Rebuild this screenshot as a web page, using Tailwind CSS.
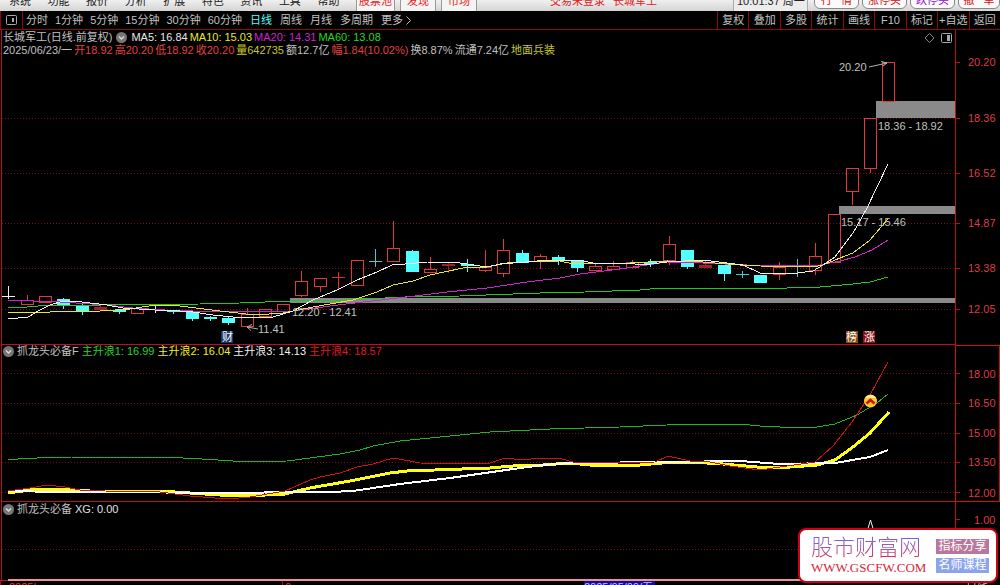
<!DOCTYPE html>
<html lang="zh-CN">
<head>
    <meta charset="UTF-8">
    <meta name="viewport" content="width=device-width, initial-scale=1.0">
    <title>长城军工 日线</title>
    <script src="https://cdn.jsdelivr.net/npm/@tailwindcss/browser@4"></script>
</head>
<body class="relative bg-black text-[#c0c0c0] text-[11px] leading-[13px] font-['Liberation_Sans','Noto_Sans_CJK_SC',sans-serif] overflow-x-hidden">
    <!-- Menú principal -->
    <header class="h-[11px] overflow-hidden flex items-end justify-between bg-linear-to-b from-[#f0f0f0] to-[#d4d4d4] text-[#222] whitespace-nowrap">
        <nav class="grid grid-cols-9 w-[347px] ml-[9px] pb-[3px] shrink-0">
            <a href="#">系统</a><a href="#">功能</a><a href="#">报价</a><a href="#">分析</a><a href="#">扩展</a><a href="#">特色</a><a href="#">资讯</a><a href="#">工具</a><a href="#">帮助</a>
        </nav>
        <div class="flex gap-[5px] text-[#e02020] shrink-0">
            <button class="bg-[#f4f4f4] border-x border-[#999] px-[2px] pb-[3px]">股票池</button>
            <button class="bg-[#f4f4f4] border-x border-[#999] px-[6px] pb-[3px]">发现</button>
            <button class="bg-[#f4f4f4] border-x border-[#999] px-[6px] pb-[3px]">市场</button>
        </div>
        <div class="flex-1 flex justify-end gap-2 pr-[76px] pb-[3px] text-[#e02020]"><span>交易未登录</span><span>长城军工</span></div>
        <div class="w-[75px] pl-[3px] pb-[3px] bg-[#ececec] border-x border-[#aaa] shrink-0">10:01:37 周一</div>
        <div class="flex gap-[3px] pl-[6px] pb-[2px] shrink-0 text-[#d01010]">
            <button class="w-[45px] pb-px rounded-md border border-[#888] bg-[#fafafa]">行&nbsp; &nbsp;情</button>
            <button class="w-[45px] pb-px rounded-md border border-[#888] bg-[#fafafa]">涨停买</button>
            <button class="w-[45px] pb-px rounded-md border border-[#888] bg-[#fafafa] text-[#9010d0]">跌停买</button>
            <button class="w-[42px] pb-px rounded-md border border-[#888] bg-[#fafafa]">撤&nbsp; &nbsp;单</button>
        </div>
    </header>

    <!-- Periodos y herramientas -->
    <div class="h-[19px] flex items-stretch border-b border-[#8c0810] border-l border-l-[#8c0810] whitespace-nowrap">
        <div class="w-[22px] flex items-center justify-center border-r border-[#8c0810]">
            <svg class="w-[11px] h-[11px]" viewBox="0 0 11 11" fill="none" stroke="#aaa"><rect x="0.5" y="0.5" width="10" height="9" rx="1"/><rect x="6" y="3" width="2" height="4" fill="#aaa" stroke="none"/></svg>
        </div>
        <div class="flex gap-[7px] pl-[3px]">
            <button>分时</button><button>1分钟</button><button>5分钟</button><button>15分钟</button><button>30分钟</button><button>60分钟</button>
        </div>
        <div class="flex gap-[8px] pl-[8px]">
            <button class="text-[#54ffff]">日线</button><button>周线</button><button>月线</button><button>多周期</button>
            <button class="flex items-center gap-[3px]">更多<svg class="w-[5px] h-[9px]" viewBox="0 0 5 9" fill="none" stroke="#c0c0c0"><path d="M0.5 0.5 4.5 4.5 0.5 8.5"/></svg></button>
        </div>
        <div class="grid grid-cols-9 w-[283px] ml-auto">
            <button class="border-l border-[#8c0810]">复权</button><button class="border-l border-[#8c0810]">叠加</button><button class="border-l border-[#8c0810]">多股</button><button class="border-l border-[#8c0810]">统计</button><button class="border-l border-[#8c0810]">画线</button><button class="border-l border-[#8c0810]">F10</button><button class="border-l border-[#8c0810]">标记</button><button class="border-l border-[#8c0810]">+自选</button><button class="border-l border-[#8c0810]">返回</button>
        </div>
    </div>

    <!-- Velas -->
    <section class="relative">
        <div class="absolute top-[1px] left-[3px] whitespace-nowrap">
            <div class="flex items-center gap-[4px]">
                <h1>长城军工(日线.前复权)</h1>
                <svg class="w-[11px] h-[11px]" viewBox="0 0 11 11"><circle cx="5.5" cy="5.5" r="5.5" fill="#777"/><path d="M3 4.5 5.5 7 8 4.5" fill="none" stroke="#ddd" stroke-width="1.3"/></svg>
                <div class="flex gap-[2px]">
                    <span class="text-[#e8e8e8]">MA5: 16.84</span><span class="text-[#e8e828]">MA10: 15.03</span><span class="text-[#d020d0]">MA20: 14.31</span><span class="text-[#20d820]">MA60: 13.08</span>
                </div>
            </div>
            <div class="flex gap-[2px] text-[#e04040]">
                <span class="text-[#c0c0c0]">2025/06/23/一</span><span>开18.92</span><span>高20.20</span><span>低18.92</span><span>收20.20</span><span class="text-[#c8c828]">量642735</span><span class="text-[#c0c0c0]">额12.7亿</span><span>幅1.84(10.02%)</span><span class="text-[#c0c0c0]">换8.87%</span><span class="text-[#c0c0c0]">流通7.24亿</span><span class="text-[#c8c828]">地面兵装</span>
            </div>
        </div>
        <svg class="block w-full h-auto" viewBox="0 30 1000 315" fill="none">
            <g stroke="#701414" stroke-dasharray="1 2" shape-rendering="crispEdges">
                <path d="M2 118.5H955M2 173.5H955M2 223.5H955M2 268.5H955M2 309.5H955"/>
            </g>
            <g fill="#8a8a8a" shape-rendering="crispEdges">
                <rect x="290" y="298" width="665" height="5"/>
                <rect x="839" y="206" width="116" height="8"/>
                <rect x="876" y="101" width="79" height="17"/>
            </g>
            <g id="velas" shape-rendering="crispEdges"></g>
            <g shape-rendering="crispEdges">
                <polyline stroke="#20c820" points="8,308 27,307 50,305 100,305 200,304 240,303 290,301 345,300 405,297 460,296 540,293 585,292 640,290 660,288 787,288 820,287 853,284 870,282 888,277"/>
                <polyline stroke="#d020d0" points="8,300 60,302 107,305 133,308 165,310 193,311 257,311 293,311 330,306 363,302 407,297 447,292 487,288 527,282 560,278 580,274 620,269 667,262 703,263 747,265 820,265 840,261 855,257 872,250 888,240"/>
                <polyline stroke="#e8e828" points="8,312 50,312 60,311 100,311 130,309 155,305 180,306 220,311 255,315 283,313 313,307 353,300 377,292 393,285 413,281 430,275 463,268 487,267 507,263 527,262 560,261 573,264 593,263 630,263 667,261 703,262 740,265 760,266 813,267 823,265 840,258 853,253 870,240 888,219"/>
                <polyline stroke="#eee" points="8,319 28,317 40,310 50,305 63,301 82,302 107,305 123,308 155,310 167,310 193,312 213,315 233,317 253,318 273,317 293,311 313,300 337,290 357,280 377,272 392,265 405,264 427,262 460,263 487,267 500,264 527,262 547,260 578,260 593,263 627,263 643,265 667,262 703,260 727,263 743,265 760,273 798,273 813,271 823,265 835,257 853,233 867,208 888,164"/>
            </g>
            <g stroke="#b0b0b0">
                <path d="M869 67 887 63M881 61.500 887 63 883 66"/>
                <path d="M258 329 247 327M252 324.500 247 327 251 330.500"/>
            </g>
            <g fill="#c0c0c0" font-size="11">
                <text x="839" y="71">20.20</text>
                <text x="878" y="130">18.36 - 18.92</text>
                <text x="841" y="226">15.17 - 15.46</text>
                <text x="292" y="316">12.20 - 12.41</text>
                <text x="258" y="333">11.41</text>
            </g>
            <g font-size="11" fill="#fff">
                <rect x="221" y="331" width="12" height="12" fill="#14386c"/><text x="222" y="341">财</text>
                <rect x="846" y="331" width="12" height="12" fill="#8a4c14"/><text x="846" y="341">榜</text>
                <rect x="863" y="331" width="12" height="12" fill="#8c0c14"/><text x="864" y="341">涨</text>
            </g>
            <path d="M929.500 33.500 934 38 929.500 42.500 925 38Z" stroke="#888"/>
            <rect x="941.500" y="33.500" width="10" height="9" rx="1" stroke="#aaa"/><rect x="947" y="35" width="3" height="6" fill="#aaa"/>
            <g stroke="#c00c1c" shape-rendering="crispEdges">
                <path d="M1.500 30V345M955 30V345M955 62.500H960M955 118.500H960M955 173.500H960M955 223.500H960M955 268.500H960M955 309.500H960"/>
                <path d="M1 344.500H955"/>
            </g>
            <g fill="#dc3c46" font-size="11">
                <text x="968" y="66">20.20</text><text x="968" y="122">18.36</text><text x="968" y="177">16.52</text><text x="968" y="227">14.87</text><text x="968" y="272">13.38</text><text x="968" y="313">12.05</text>
            </g>
        </svg>
    </section>

    <!-- Indicador F -->
    <section class="relative">
        <div class="absolute top-0 left-[3px] flex items-center gap-[3px] whitespace-nowrap">
            <svg class="w-[11px] h-[11px]" viewBox="0 0 11 11"><circle cx="5.5" cy="5.5" r="5.5" fill="#777"/><path d="M3 4.5 5.5 7 8 4.5" fill="none" stroke="#ddd" stroke-width="1.3"/></svg>
            <h2>抓龙头必备F</h2>
            <span class="text-[#20d820]">主升浪1: 16.99</span><span class="text-[#f0f020]">主升浪2: 16.04</span><span class="text-[#f0f0f0]">主升浪3: 14.13</span><span class="text-[#e01820]">主升浪4: 18.57</span>
        </div>
        <svg class="block w-full h-auto" viewBox="0 345 1000 157" fill="none">
            <path d="M2 373.500H955M2 403.500H955M2 433.500H955M2 462.500H955M2 492.500H955" stroke="#701414" stroke-dasharray="1 2" shape-rendering="crispEdges"/>
            <g shape-rendering="crispEdges">
                <polyline stroke="#20b420" points="8,460 18,459 37,458 72,457 128,457 183,458 202,459 233,461 243,462 287,461 310,458 340,454 360,450 373,446 400,441 450,436 490,432 550,429 620,427 690,424 740,424 760,426 780,427 817,427 835,424 857,415 877,403 888,394"/>
                <polyline stroke="#ffff10" stroke-width="3" points="8,493 30,490 60,489 90,491 160,491 190,493 220,495 245,496 285,494 310,488 350,481 390,473 407,471 490,468 513,466 543,465 570,463 590,465 640,465 673,462 707,463 723,464 757,467 790,467 817,465 835,460 853,447 870,433 889,412"/>
                <polyline stroke="#fff" stroke-width="2" points="8,491 60,492 130,492 200,493 330,492 353,491 373,488 400,484 450,478 513,469 543,465 570,463 670,462 740,461 780,464 835,463 870,457 888,450"/>
                <polyline stroke="#d01018" points="8,491 30,488 47,485 65,487 80,490 105,491 160,492 190,496 228,499 250,497 285,491 310,480 320,477 340,473 357,467 373,464 393,458 410,461 420,463 487,464 505,458 523,460 540,458 558,458 577,463 655,462 668,456 690,461 705,461 730,466 760,470 780,467 815,462 833,446 852,422 870,395 888,362"/>
            </g>
            <circle cx="870.500" cy="401" r="6.500" fill="#ffc828"/><path d="M865 398a6.500 6.500 0 0 1 11 0Z" fill="#fff0a0"/><path d="M866.500 403.500 870.500 400 874.500 403.500" stroke="#d01010" stroke-width="2.500"/>
            <g shape-rendering="crispEdges">
                <path d="M1.500 345V502M1 501.500H955" stroke="#c00c1c"/>
                <path d="M955.500 345.500H999V501.500H955.500Z" stroke="#e00810"/>
                <path d="M955 373.500H960M955 403.500H960M955 433.500H960M955 462.500H960M955 492.500H960" stroke="#c00c1c"/>
            </g>
            <g fill="#dc3c46" font-size="11">
                <text x="968" y="378">18.00</text><text x="968" y="407">16.50</text><text x="968" y="437">15.00</text><text x="968" y="466">13.50</text><text x="968" y="497">12.00</text>
            </g>
        </svg>
    </section>

    <!-- Indicador XG -->
    <section class="relative">
        <div class="absolute top-[1px] left-[3px] flex items-center gap-[3px] whitespace-nowrap">
            <svg class="w-[11px] h-[11px]" viewBox="0 0 11 11"><circle cx="5.5" cy="5.5" r="5.5" fill="#777"/><path d="M3 4.5 5.5 7 8 4.5" fill="none" stroke="#ddd" stroke-width="1.3"/></svg>
            <h2>抓龙头必备</h2>
            <span class="text-[#e0e0e0]">XG: 0.00</span>
        </div>
        <svg class="block w-full h-auto" viewBox="0 502 1000 79" fill="none">
            <g shape-rendering="crispEdges">
                <path d="M2 549.500H955" stroke="#701414" stroke-dasharray="1 2"/>
                <path d="M1.500 502V581M955 502V581M955 519.500H960" stroke="#c00c1c"/>
                <path d="M0 580.500H955" stroke="#c00c1c"/>
                <path d="M8 580H955" stroke="#f09098" stroke-width="2"/>
            </g>
            <path d="M867.500 530 870.500 520 873.500 530" stroke="#eee"/>
            <text x="974" y="524" fill="#dc3c46" font-size="11">1.00</text>
        </svg>
    </section>

    <!-- Eje de fechas -->
    <footer class="h-[4px] overflow-hidden flex text-[#dc3c46] border-l border-[#a80c18] whitespace-nowrap">
        <span class="w-[281px] pl-[8px]">2025|</span>
        <span class="w-[302px] pl-[2px] border-l border-[#a80c18]">6</span>
        <span class="w-[71px] bg-[#10109c] text-[#c0c0e0]">2025/05/09/五</span>
        <span class="ml-auto pr-[12px] text-[#c0c0c0]">日线</span>
    </footer>

    <!-- Sello del sitio -->
    <a href="#" class="absolute right-[2px] top-[528px] w-[200px] h-[55px] flex items-center justify-between pl-[11px] pr-[7px] bg-white border-2 border-[#d00010] rounded-lg whitespace-nowrap">
        <span class="flex flex-col">
            <span class="text-[22px] leading-[24px] font-light bg-linear-to-b from-[#7060f0] to-[#d81840] bg-clip-text text-transparent">股市财富网</span>
            <span class="text-[13px] leading-[16px] text-[#d82838] font-['Liberation_Serif',serif]">WWW.GSCFW.COM</span>
        </span>
        <span class="flex flex-col gap-[4px] text-[12px] leading-[15px] text-white text-center">
            <span class="w-[53px] bg-[#b8789c]">指标分享</span>
            <span class="w-[53px] bg-[#8ca4ec]">名师课程</span>
        </span>
    </a>

    <script>
        // [x, arriba, abajo, mecha arriba, mecha abajo, tipo]
        // r: sube, c: baja, d: roja rellena, x/y/z: cruz blanca, cian, roja
        const velas = [
            [8,296,296,286,299,'x'],[27,300,304,295,304,'r'],[45,296,302,296,302,'r'],[63,299,305,298,309,'c'],
            [82,305,311,302,315,'c'],[100,307,310,304,310,'d'],[119,310,312,310,314,'c'],[137,308,313,308,313,'r'],
            [155,309,309,305,313,'x'],[173,310,312,310,314,'c'],[192,312,319,312,321,'c'],[210,317,319,316,321,'c'],
            [228,318,323,316,325,'c'],[247,314,326,308,326,'r'],[265,309,316,309,316,'r'],[283,304,311,304,311,'r'],
            [301,281,295,271,297,'r'],[320,278,286,278,292,'r'],[338,277,277,272,289,'z'],[357,260,285,260,285,'r'],
            [375,261,261,249,267,'y'],[393,248,261,221,261,'r'],[412,251,272,250,272,'c'],[430,269,272,257,273,'r'],
            [448,264,266,262,273,'d'],[467,264,266,259,272,'c'],[485,267,270,250,272,'r'],[503,250,273,239,277,'r'],
            [522,253,263,250,263,'c'],[540,256,261,254,269,'r'],[558,257,260,255,265,'c'],[577,260,268,260,272,'c'],
            [595,266,270,263,271,'r'],[613,266,269,261,270,'r'],[632,262,267,260,268,'r'],[650,262,264,259,267,'c'],
            [669,244,260,236,265,'r'],[687,250,267,250,269,'c'],[705,265,268,261,268,'d'],[724,265,274,265,281,'c'],
            [742,274,274,271,278,'y'],[760,275,283,275,283,'c'],[779,267,274,262,280,'r'],[797,268,268,259,277,'w'],
            [815,256,270,243,275,'r'],[834,214,262,214,262,'r'],[852,168,191,168,205,'r'],[870,118,168,118,173,'r'],
            [888,62,101,62,101,'r']
        ];
        const color = { r: '#e03840', d: '#a02028', c: '#54ffff', x: '#eeeeee', y: '#54c8c8', z: '#e82830', w: '#54c8c8' };
        let dibujo = '';
        for (const [x, a, b, ma, mb, t] of velas) {
            const s = color[t], cx = x + 0.5;
            if ('xyz'.includes(t)) {
                dibujo += `<path d="M${cx} ${ma}V${mb}M${x - 6} ${a + 0.5}H${x + 7}" stroke="${s}"/>`;
            } else if (t === 'w') {
                dibujo += `<path d="M${cx} ${ma}V${mb}" stroke="${s}"/>`;
            } else {
                dibujo += `<path d="M${cx} ${ma}V${a}M${cx} ${b}V${mb}" stroke="${s}"/>`;
                dibujo += t === 'r'
                    ? `<rect x="${x - 5.5}" y="${a + 0.5}" width="12" height="${b - a}" stroke="${s}"/>`
                    : `<rect x="${x - 6}" y="${a}" width="13" height="${b - a}" fill="${s}"/>`;
            }
        }
        document.getElementById('velas').innerHTML = dibujo;
    </script>
</body>
</html>
